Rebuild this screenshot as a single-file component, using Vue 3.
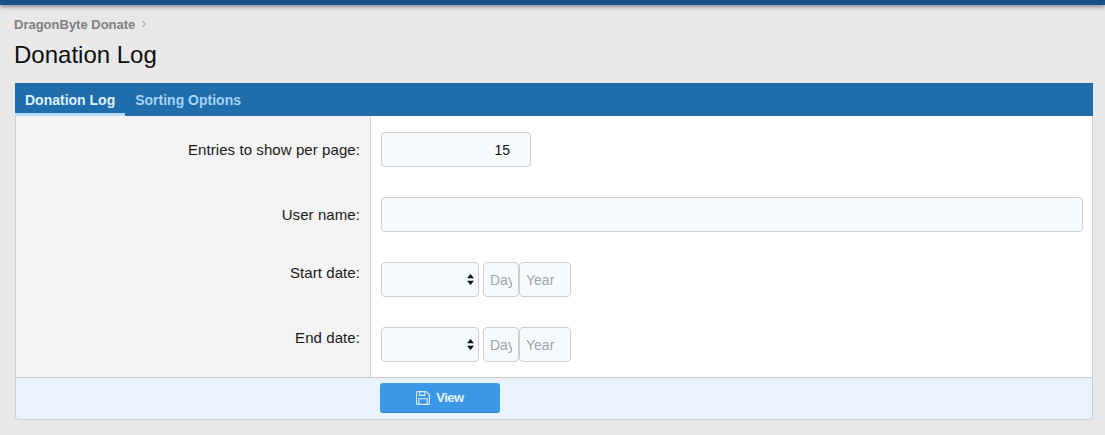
<script setup>
const dateRows = [
  { label: 'Start date:' },
  { label: 'End date:' },
]
</script>

<template>
  <div class="page">
    <div class="topbar"></div>
    <div class="content">
      <nav class="crumbs"><span class="crumb">DragonByte Donate</span><svg class="chev" width="6" height="8" viewBox="0 0 6 8"><path d="M1 .8 4.4 4 1 7.2" fill="none" stroke="#8a8a8a" stroke-width="1"/></svg></nav>
      <h1 class="title">Donation Log</h1>
      <section class="panel">
        <div class="tabs">
          <a class="tab active">Donation Log</a>
          <a class="tab">Sorting Options</a>
        </div>
        <form class="form" @submit.prevent>
          <div class="labels">
            <label class="lbl l1">Entries to show per page:</label>
            <label class="lbl l2">User name:</label>
            <label class="lbl l3" v-for="r in dateRows" :key="r.label">{{ r.label }}</label>
          </div>
          <div class="fields">
            <div class="field f1"><input class="input num" value="15" /></div>
            <div class="field f2"><input class="input wide" /></div>
            <div class="field f3" v-for="r in dateRows" :key="r.label">
              <div class="selbox">
                <select class="input sel"><option></option></select>
                <svg class="arrows" width="7" height="11" viewBox="0 0 7 11"><path d="M3.5 0 7 4.2H0zM3.5 11 0 6.8h7z" fill="#111"/></svg>
              </div>
              <input class="input day" placeholder="Day" />
              <input class="input year" placeholder="Year" />
            </div>
          </div>
        </form>
        <div class="foot">
          <button class="btn" type="button">
            <svg width="14" height="14" viewBox="0 0 14 14" fill="none" stroke="#d6ebfb" stroke-width="1.1"><path d="M1.5.6h8.6l3.3 3.2v8.6a1 1 0 0 1-1 1H1.5a1 1 0 0 1-1-1V1.6a1 1 0 0 1 1-1z"/><path d="M3.6.8v3.6h5.2V.8M2.8 13.2V7.8h8.4v5.4"/></svg>
            <span class="btxt">View</span>
          </button>
        </div>
      </section>
    </div>
  </div>
</template>

<style>
html, body { margin: 0; background: #e8e8e8; }
</style>

<style scoped>
.page { width: 1105px; height: 435px; overflow: hidden; background: #e8e8e8; font-family: "Liberation Sans", Arial, sans-serif; color: #111; }
.topbar { height: 5px; background: #175185; box-shadow: 0 1px 5px rgba(0,0,0,.55); }
.content { padding: 11px 12px 0 14px; }
.crumbs { display: flex; align-items: center; gap: 6px; height: 16px; }
.crumb { font-size: 13px; font-weight: 700; color: #808080; }
.title { margin: 8px 0 0; font-size: 24px; line-height: 30px; font-weight: 400; color: #0e0e0e; }
.panel { margin: 13px 0 0 1px; height: 337px; display: flex; flex-direction: column; }
.tabs { height: 33px; background: #1f6daa; display: flex; flex: none; }
.tab { padding: 0 10px; font-size: 14px; font-weight: 700; line-height: 34px; color: #a5d4f6; box-sizing: border-box; height: 33px; }
.tab.active { color: #dff0fc; border-bottom: 3px solid #b5dcf8; }
.form { flex: 1; display: flex; min-height: 0; background: #fff; border: 1px solid #cfcfcf; border-width: 0 1px; }
.labels { width: 354px; flex: none; background: #f3f3f3; border-right: 1px solid #d4d4d4; padding-top: 16px; }
.lbl { display: block; text-align: right; padding-right: 10px; font-size: 15px; letter-spacing: .08px; line-height: 35px; height: 35px; color: #1a1a1a; }
.l2 { margin-top: 30px; }
.l3 { margin-top: 30px; line-height: 21px; }
.fields { flex: 1; padding: 16px 10px 0 10px; }
.field { height: 35px; margin-bottom: 30px; display: flex; }
.input { box-sizing: border-box; height: 35px; margin: 0; border: 1px solid #cdcfd1; border-radius: 4px; background: #f7fafd; font: 14px "Liberation Sans", Arial, sans-serif; color: #111; padding: 0 8px; outline: none; }
.input::placeholder { color: #a0a4a8; opacity: 1; }
.num { width: 150px; text-align: right; padding-right: 20px; }
.wide { width: 702px; }
.selbox { position: relative; width: 98px; margin-right: 4px; }
.sel { width: 98px; appearance: none; -webkit-appearance: none; }
.arrows { position: absolute; right: 5px; top: 12px; pointer-events: none; }
.day { width: 36px; padding: 0 6px; }
.year { width: 52px; padding: 0 0 0 6px; }
.foot { height: 43px; flex: none; background: #e8f3fd; border: 1px solid #cfcfcf; border-top-color: #c9c9c9; border-radius: 0 0 4px 4px; padding: 5px 0 0 364px; box-sizing: border-box; }
.btn { width: 120px; height: 30px; border: 0; border-bottom: 1px solid #2f84c8; border-radius: 3px; background: #3b98e6; color: #e6f3fd; font: 700 13px "Liberation Sans", Arial, sans-serif; display: flex; align-items: center; justify-content: center; gap: 6px; padding: 0; }
.btxt { letter-spacing: -.5px; }
</style>
